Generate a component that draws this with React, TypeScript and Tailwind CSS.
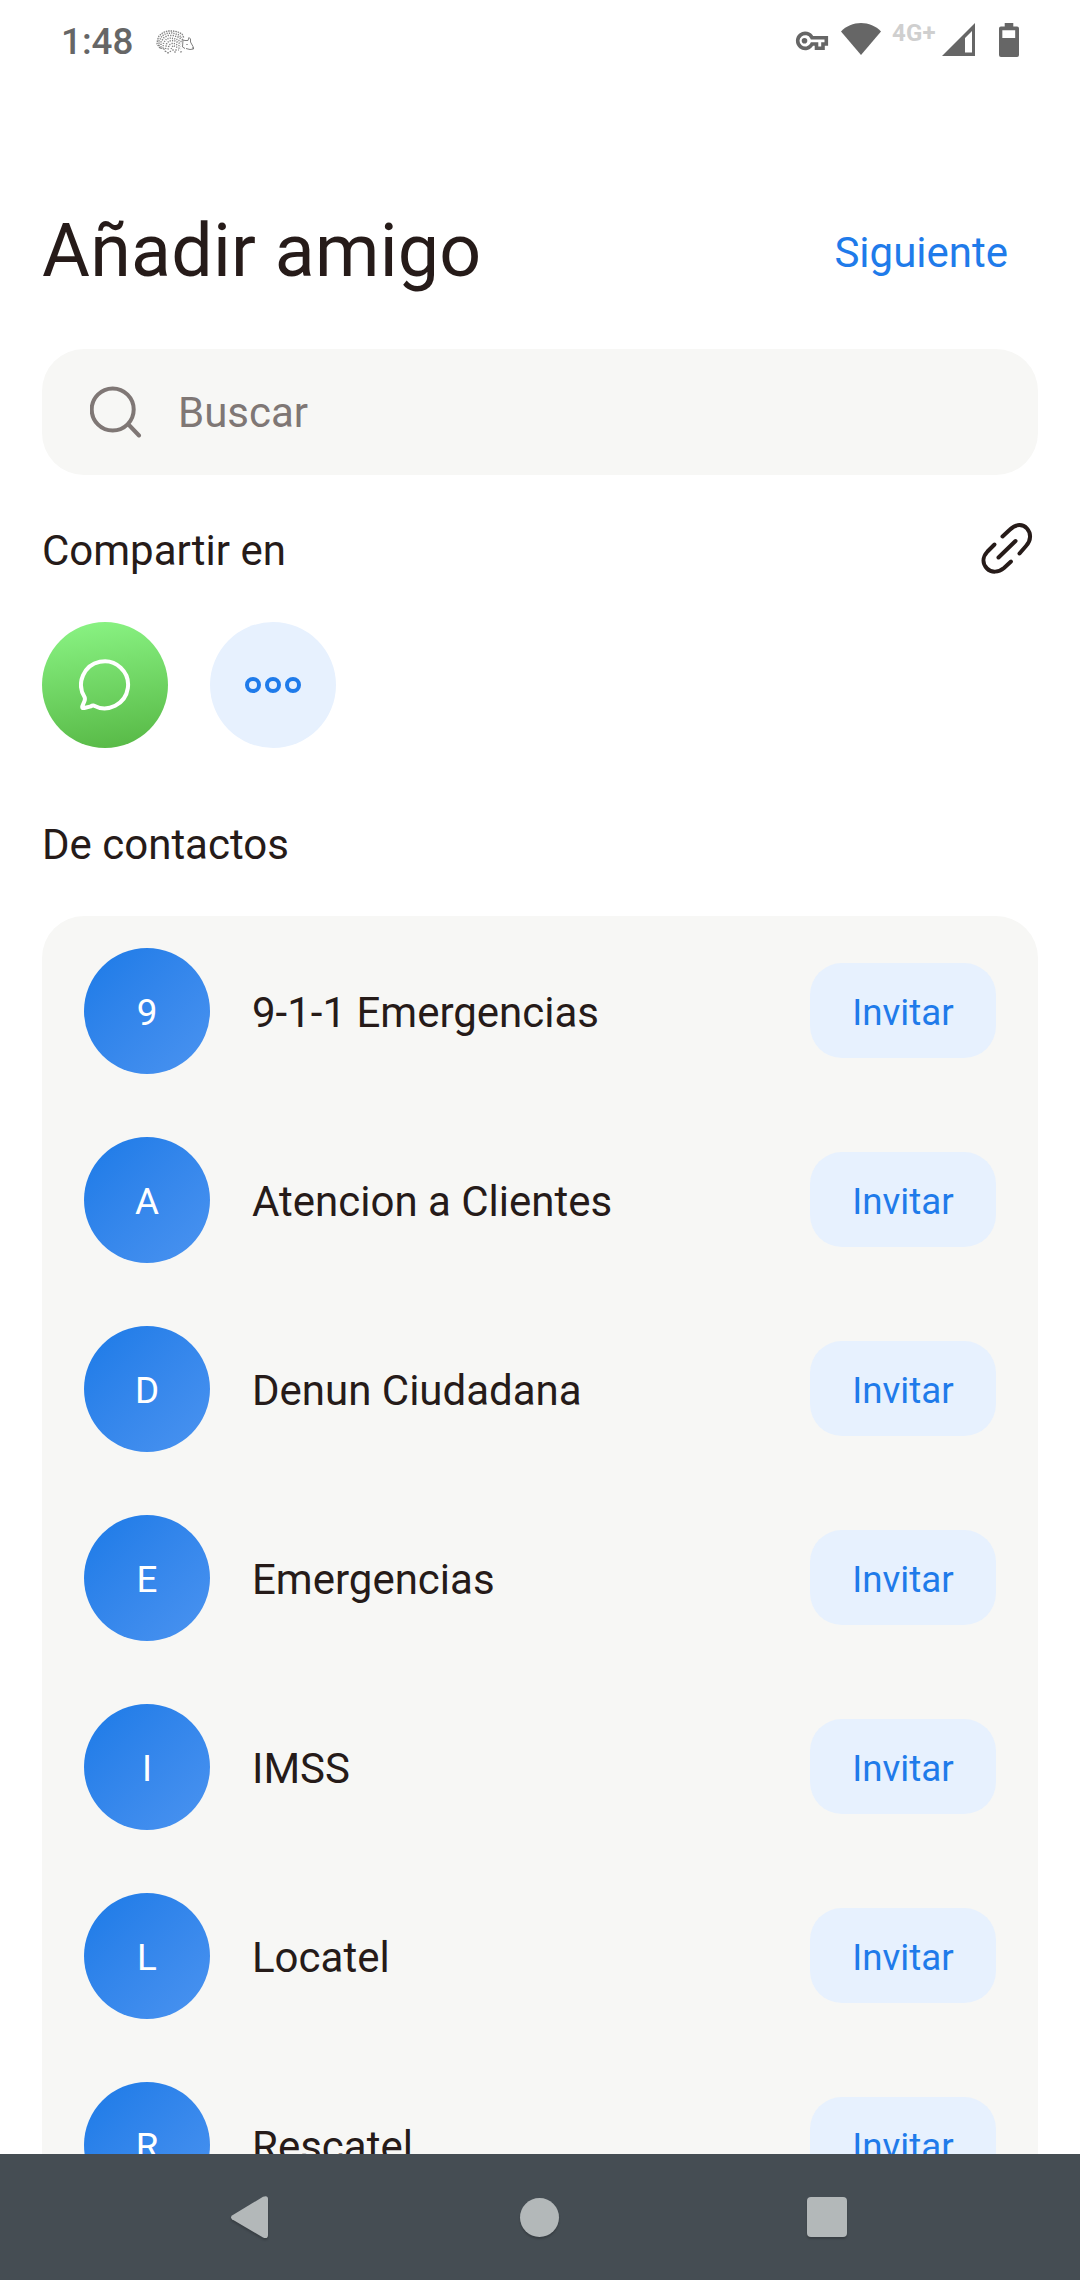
import React from "react";

const contacts = [
  { initial: "9", name: "9-1-1 Emergencias" },
  { initial: "A", name: "Atencion a Clientes" },
  { initial: "D", name: "Denun Ciudadana" },
  { initial: "E", name: "Emergencias" },
  { initial: "I", name: "IMSS" },
  { initial: "L", name: "Locatel" },
  { initial: "R", name: "Rescatel" },
];

function HedgehogIcon() {
  return (
    <svg className="ml-[22px] h-[26px] w-10" viewBox="0 0 40 26" fill="none" stroke="#808080">
      <path
        d="M5 19L2 15L2.500 11L4 7L8 3.500L13 2L18 2L23 3L27 5L29 9"
        strokeWidth="1.300"
        strokeDasharray="1.5 0.9"
      />
      <path d="M4 17L4 12L7 7L11 4.500L17 4L23 5.500L27 8.500" strokeWidth="1.500" strokeDasharray="1.2 1.1" />
      <path d="M6 18.500L6 13L9 8.500L13 6.500L18 6.500L23 8L28 11" strokeWidth="1.500" strokeDasharray="1.3 1.2" />
      <path d="M8 19.500L8.500 14L11.500 10L16 9L21 10L27 13" strokeWidth="1.500" strokeDasharray="1.1 1.2" />
      <path d="M10.500 20L11.500 15L14 12L19 11.500L26 15" strokeWidth="1.500" strokeDasharray="1.2 1.2" />
      <path d="M13 20.500L14 16L18 14L26 17.500" strokeWidth="1.500" strokeDasharray="1.2 1.3" />
      <path d="M16 20L18 16.500L26 20" strokeWidth="1.300" strokeDasharray="1.2 1.3" />
      <path d="M5 19L9 20L10 22L13 24L16 22M17 21L24 21M19 23L22 23M25 23L28 22.500" strokeWidth="1.100" strokeDasharray="2 1" />
      <path
        d="M28 11L30 11.500L33 11.500L34 8.500L35.500 10L35.500 13L38 17.500L38.500 20L35 20.500L31 19.500M28 11L27.500 18L30 19.500"
        strokeWidth="1"
      />
      <path d="M31.500 15.500h1M37.400 19h1.200" strokeWidth="1.200" stroke="#555" />
    </svg>
  );
}

function StatusBar() {
  return (
    <header className="flex h-[84px] items-center pr-[61px] pl-[61px] text-[#666666]">
      <span className="pt-px text-[36.750px] leading-none font-medium">1:48</span>
      <HedgehogIcon />
      <svg className="mb-[2px] ml-auto h-5 w-[34px]" viewBox="0 0 34 20" fill="none" stroke="#666666">
        <path d="M17 6.700H31.300V13H28V17.300H21.500V13H17A7.500 7.500 0 1 1 17 6.700Z" strokeWidth="3.600" strokeLinejoin="miter" />
        <circle cx="9.500" cy="9.800" r="2.800" fill="#666666" stroke="none" />
      </svg>
      <svg className="mb-[6px] ml-[12px] h-8 w-10" viewBox="0 0 40 32" fill="#666666">
        <path d="M0 8.500C5 3 12.500 0 20 0S35 3 40 8.500L20 32Z" />
      </svg>
      <span className="mb-[18px] ml-[11px] w-[50px] text-[24px] leading-none font-bold tracking-[0.200px] text-[#cfcfcf]">4G+</span>
      <svg className="mb-[5px] h-[33px] w-[33px]" viewBox="0 0 33 33" fill="#666666">
        <path fillRule="evenodd" d="M33 0V33H0ZM30 8L23 15V29.500H30Z" />
      </svg>
      <svg className="mb-[4px] ml-6 h-[34px] w-[20px]" viewBox="0 0 21 34" preserveAspectRatio="none" fill="#666666">
        <path fillRule="evenodd" d="M6 0h9v3.500h4a2 2 0 0 1 2 2V32a2 2 0 0 1-2 2H2a2 2 0 0 1-2-2V5.500a2 2 0 0 1 2-2h4ZM3.500 7.300V15h13.500V7.300Z" />
      </svg>
    </header>
  );
}

function ContactRow({ initial, name }: { initial: string; name: string }) {
  return (
    <li className="flex h-[189px] items-center pr-[42px] pl-[42px]">
      <span className="flex size-[126px] shrink-0 items-center justify-center rounded-full bg-linear-to-br from-[#1a7ae7] to-[#4a93f0] pt-[6px] text-[36.750px] leading-none text-white">
        {initial}
      </span>
      <span className="ml-[42px] flex-1 pt-[5px] text-[42px] leading-none">{name}</span>
      <button className="flex h-[95px] w-[186px] items-center justify-center rounded-[32px] bg-[#e7f1fe] pt-[5px] text-[36.750px] leading-none text-[#1f7bea]">
        Invitar
      </button>
    </li>
  );
}

function NavigationBar() {
  return (
    <nav className="flex h-[126px] shrink-0 items-center justify-between bg-[#454d53] pr-[233px] pl-[231px]">
      <svg className="h-[43px] w-10 overflow-visible drop-shadow-[0_2px_1px_rgba(0,0,0,0.200)]" viewBox="0 0 40 43" fill="#b3b8b9">
        <path d="M1 19.500L32 .8Q37 -1 37 3V39Q37 43.500 32 41.500L1 23.200Q-1 21.300 1 19.500Z" />
      </svg>
      <span className="ml-px size-[39px] rounded-full bg-[#b3b8b9] shadow-[0_2px_2px_rgba(0,0,0,0.200)]" />
      <span className="size-10 rounded-[4px] bg-[#b3b8b9] shadow-[0_2px_2px_rgba(0,0,0,0.200)]" />
    </nav>
  );
}

export default function App() {
  return (
    <div className="flex h-[2280px] w-[1080px] flex-col overflow-hidden bg-white font-['Roboto',sans-serif] text-[#261b19]">
      <StatusBar />
      <main className="min-h-0 flex-1 overflow-hidden px-[42px]">
        <div className="mt-[105px] flex h-[126px] items-center justify-between pr-[30px]">
          <h1 className="text-[73.500px] leading-none tracking-[0.250px]">Añadir amigo</h1>
          <button className="pt-px text-[42px] leading-none text-[#1f7bea]">Siguiente</button>
        </div>
        <div className="mt-[34px] flex h-[126px] items-center rounded-[42px] bg-[#f7f7f5] pl-[48px] text-[#7f7775]">
          <svg className="size-[52px]" viewBox="0 0 52 52" fill="none" stroke="currentColor" strokeWidth="4" strokeLinecap="round">
            <circle cx="22.700" cy="23.500" r="21" />
            <path d="M38.500 38.500L49 49.500" />
          </svg>
          <span className="ml-[36px] pt-[2px] text-[42px] leading-none">Buscar</span>
        </div>
        <div className="mt-[42px] flex h-[66px] items-center justify-between pr-[5px]">
          <h2 className="pt-[2px] text-[42px] leading-none">Compartir en</h2>
          <svg className="mb-[4px] size-[52px]" viewBox="0 0 52 52" fill="none" stroke="currentColor" strokeWidth="4" strokeLinecap="round">
            <path d="M21.500 14.500L29 7.500C35 1.500 42 2 46 6.500S50.500 18 45 24L38.500 31.500" />
            <path d="M13.500 22.500L6.500 29.500C1 35.500 1.500 42 6 46.500S17.500 50.500 23 46L30 39.500" />
            <path d="M17.500 35.500L34.500 19" />
          </svg>
        </div>
        <div className="mt-[39px] flex gap-[42px]">
          <button className="flex size-[126px] items-center justify-center rounded-full bg-linear-[172deg] from-[#8bf585] to-[#56b744]">
            <svg className="size-[52px]" viewBox="0 0 52 52" fill="none" stroke="white" strokeWidth="4" strokeLinejoin="round">
              <path d="M14.500 46.500A23.500 23.500 0 1 0 5.500 38Q6.300 39.500 5.500 42L3.400 47Q2.600 49.600 5.200 49L11.800 47.400Q13.300 46.200 14.500 46.500Z" />
            </svg>
          </button>
          <button className="flex size-[126px] items-center justify-center gap-[4px] rounded-full bg-[#e7f1fe]">
            <span className="size-4 rounded-full border-4 border-[#1f7bea]" />
            <span className="size-4 rounded-full border-4 border-[#1f7bea]" />
            <span className="size-4 rounded-full border-4 border-[#1f7bea]" />
          </button>
        </div>
        <h2 className="mt-[76px] text-[42px] leading-[42px]">De contactos</h2>
        <ul className="mt-[50px] rounded-[42px] bg-[#f7f7f5]">
          {contacts.map((contact) => (
            <ContactRow key={contact.name} {...contact} />
          ))}
        </ul>
      </main>
      <NavigationBar />
    </div>
  );
}
